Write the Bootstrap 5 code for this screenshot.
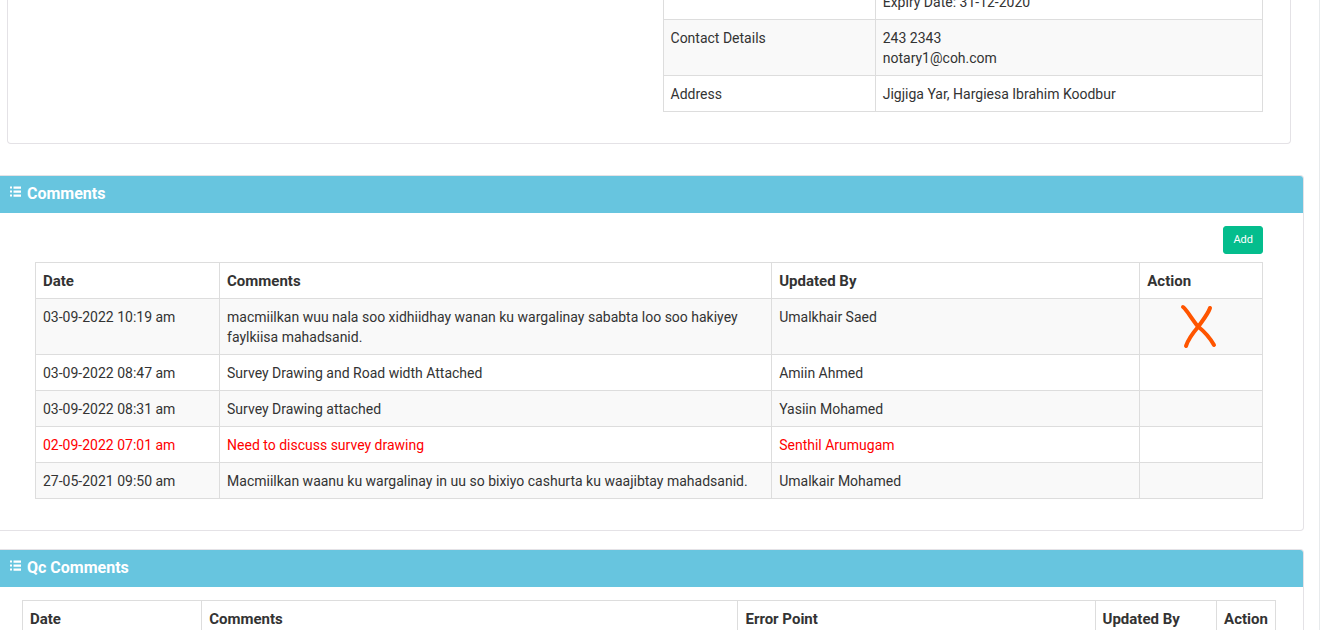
<!DOCTYPE html>
<html lang="en">
<head>
<meta charset="utf-8">
<meta name="viewport" content="width=device-width, initial-scale=1">
<title>Comments</title>
<link href="https://cdn.jsdelivr.net/npm/bootstrap@5.3.0/dist/css/bootstrap.min.css" rel="stylesheet">
<style>
  body { font-family: Roboto, "Liberation Sans", sans-serif; font-size: 14px; line-height: 20px; color: #333; }
  .page-shell { padding-right: 15px; border-right: 1px solid #e7eaec; }
  .panel { border: 1px solid #e4e2e6; border-radius: 4px; background: #fff; }
  .panel-flush { border-left: 0; border-top-left-radius: 0; border-bottom-left-radius: 0; }
  .detail-panel { margin: 0 13px 31px 7px; border-top: 0; border-top-left-radius: 0; border-top-right-radius: 0; padding: 0 27px 31px; }
  .detail-wrap { width: 48.9%; margin-top: -9px; }
  .comments-panel { margin-bottom: 18px; }
  .panel-title { background: #67c5df; color: #fff; font-size: 16px; font-weight: 700; line-height: 20px; padding: 8px 9px 9px; margin: 0; border-top-right-radius: 3px; display: flex; gap: 6px; }
  .panel-title svg { margin-top: 2px; }
  .comments-body { padding: 13px 40px 31px 35px; }
  .qc-body { padding: 13px 27px 31px 22px; }
  .table.grid { --bs-table-color: #333; --bs-table-bg: transparent; color: #333; border-color: #ddd; table-layout: fixed; margin: 0; }
  .table.grid > :not(caption) > * > * { padding: 8px 7px 7px; border: 1px solid #ddd; color: inherit; box-shadow: none; }
  .table.grid th { font-size: 15px; font-weight: 700; }
  .table.grid tr.shade > * { background: #f9f9f9; }
  .table.grid tr.flagged { color: #f00; }
  .btn-add { --bs-btn-color: #fff; --bs-btn-bg: #04bd8d; --bs-btn-border-color: #04bd8d; --bs-btn-hover-color: #fff; --bs-btn-hover-bg: #03a67c; --bs-btn-padding-y: 4px; --bs-btn-padding-x: 9px; --bs-btn-font-size: 11px; --bs-btn-border-radius: 3px; line-height: 18px; }
  .cross { top: 4px; left: 40px; }
</style>
</head>
<body>
<div class="page-shell vh-100 overflow-hidden">
  <section class="panel detail-panel d-flex justify-content-end">
    <div class="detail-wrap">
      <table class="table grid">
        <colgroup><col style="width:35.4%"><col></colgroup>
        <tbody>
          <tr><td></td><td class="pt-0">Expiry Date: 31-12-2020</td></tr>
          <tr class="shade"><td>Contact Details</td><td>243 2343<br>notary1@coh.com</td></tr>
          <tr><td>Address</td><td>Jigjiga Yar, Hargiesa Ibrahim Koodbur</td></tr>
        </tbody>
      </table>
    </div>
  </section>

  <section class="panel panel-flush comments-panel">
    <h2 class="panel-title">
      <svg width="12" height="12" viewBox="0 0 12 12" fill="#fff" aria-hidden="true"><path d="M1 .6h2v2H1zM1 4.600h2v2H1zM1 8.600h2v2H1zM4.500 .5h7.500v2.200H4.500zM4.500 4.500h7.500v2.200H4.500zM4.500 8.500h7.500v2.200H4.500z"/></svg>
      <span>Comments</span>
    </h2>
    <div class="comments-body">
      <div class="d-flex justify-content-end mb-2"><button type="button" class="btn btn-add">Add</button></div>
      <table class="table grid">
        <colgroup><col style="width:15%"><col style="width:45%"><col style="width:30%"><col style="width:10%"></colgroup>
        <thead><tr><th scope="col">Date</th><th scope="col">Comments</th><th scope="col">Updated By</th><th scope="col">Action</th></tr></thead>
        <tbody>
          <tr class="shade"><td>03-09-2022 10:19 am</td><td>macmiilkan wuu nala soo xidhiidhay wanan ku wargalinay sababta loo soo hakiyey faylkiisa mahadsanid.</td><td>Umalkhair Saed</td>
            <td class="position-relative"><svg class="cross position-absolute" width="38" height="46" viewBox="0 0 38 46" fill="none" stroke="#ff5500" stroke-width="4" stroke-linecap="round" aria-hidden="true"><path d="M3 4C7 7 11 15 18 23.500C25 29 30 35 34 42"/><path d="M30 5C28 11 23 17 18 24C12 31 8 37 6 43"/></svg></td></tr>
          <tr><td>03-09-2022 08:47 am</td><td>Survey Drawing and Road width Attached</td><td>Amiin Ahmed</td><td></td></tr>
          <tr class="shade"><td>03-09-2022 08:31 am</td><td>Survey Drawing attached</td><td>Yasiin Mohamed</td><td></td></tr>
          <tr class="flagged"><td>02-09-2022 07:01 am</td><td>Need to discuss survey drawing</td><td>Senthil Arumugam</td><td></td></tr>
          <tr class="shade"><td>27-05-2021 09:50 am</td><td>Macmiilkan waanu ku wargalinay in uu so bixiyo cashurta ku waajibtay mahadsanid.</td><td>Umalkair Mohamed</td><td></td></tr>
        </tbody>
      </table>
    </div>
  </section>

  <section class="panel panel-flush">
    <h2 class="panel-title">
      <svg width="12" height="12" viewBox="0 0 12 12" fill="#fff" aria-hidden="true"><path d="M1 .6h2v2H1zM1 4.600h2v2H1zM1 8.600h2v2H1zM4.500 .5h7.500v2.200H4.500zM4.500 4.500h7.500v2.200H4.500zM4.500 8.500h7.500v2.200H4.500z"/></svg>
      <span>Qc Comments</span>
    </h2>
    <div class="qc-body">
      <table class="table grid">
        <colgroup><col style="width:14.3%"><col style="width:42.8%"><col style="width:28.5%"><col style="width:9.7%"><col></colgroup>
        <thead><tr><th scope="col">Date</th><th scope="col">Comments</th><th scope="col">Error Point</th><th scope="col">Updated By</th><th scope="col">Action</th></tr></thead>
      </table>
    </div>
  </section>
</div>
<script src="https://cdn.jsdelivr.net/npm/bootstrap@5.3.0/dist/js/bootstrap.bundle.min.js"></script>
</body>
</html>
